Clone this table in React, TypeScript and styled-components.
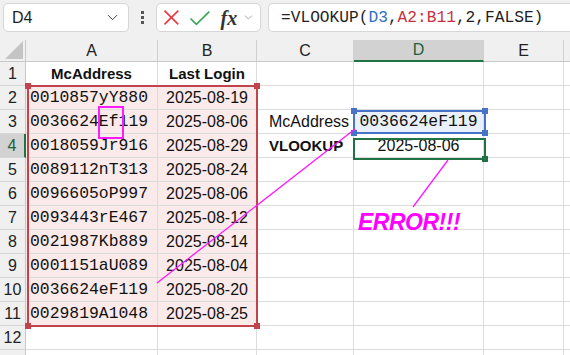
import React from "react";
import styled, { createGlobalStyle } from "styled-components";
import { ChevronDown } from "lucide-react";

const GlobalStyle = createGlobalStyle`
  html, body {
    margin: 0;
    padding: 0;
    background: #ffffff;
    overflow: hidden;
  }
  body {
    font-family: "Liberation Sans", Arial, sans-serif;
  }
`;

const SANS = `"Liberation Sans", Arial, sans-serif`;
const MONO = `"Liberation Mono", "DejaVu Sans Mono", monospace`;
const GRID_LINE = "#dcdcdc";
const GREEN = "#217346";
const RANGE_RED = "#c1434b";
const SEL_BLUE = "#4673c8";
const MAGENTA = "#ff1aff";

type CellData = {
  text?: React.ReactNode;
  mono?: boolean;
  bold?: boolean;
  align?: "left" | "center" | "right";
  fill?: string;
  error?: boolean;
};

const PINK = "#fbeaea";

const rows: Record<number, Record<string, CellData>> = {
  1: {
    A: { text: "McAddress", bold: true, align: "center" },
    B: { text: "Last Login", bold: true, align: "center" },
  },
  3: {
    C: { text: "McAddress" },
    D: { text: "0036624eF119", mono: true, align: "center", fill: "#eaf0f9" },
  },
  4: {
    C: { text: "VLOOKUP", bold: true },
    D: { text: "2025-08-06", align: "center" },
  },
  7: {
    D: { text: "ERROR!!!", error: true },
  },
};

const data: [React.ReactNode, string][] = [
  ["0010857yY880", "2025-08-19"],
  [
    <>
      0036624<Marked>Ef</Marked>119
    </>,
    "2025-08-06",
  ],
  ["0018059Jr916", "2025-08-29"],
  ["0089112nT313", "2025-08-24"],
  ["0096605oP997", "2025-08-06"],
  ["0093443rE467", "2025-08-12"],
  ["0021987Kb889", "2025-08-14"],
  ["0001151aU089", "2025-08-04"],
  ["0036624eF119", "2025-08-20"],
  ["0029819A1048", "2025-08-25"],
];

data.forEach(([mac, date], i) => {
  const r = i + 2;
  rows[r] = {
    ...(rows[r] || {}),
    A: { text: mac, mono: true, fill: PINK },
    B: { text: date, align: "center", fill: PINK },
  };
});

const COLS = ["A", "B", "C", "D", "E", "F"];
const ROW_COUNT = 13;
const LAST_FULL_ROW = 12;

function Marked({ children }: { children: React.ReactNode }) {
  return <MarkSpan>{children}</MarkSpan>;
}

export default function App() {
  return (
    <>
      <GlobalStyle />
      <Page>
        <Toolbar>
          <NameBox>
            <NameText>D4</NameText>
            <ChevronDown size={17} strokeWidth={1.4} color="#444" />
          </NameBox>
          <Grip>
            <span />
            <span />
            <span />
          </Grip>
          <Controls>
            <svg width="17" height="17" viewBox="0 0 17 17">
              <path d="M1.5 1.5 L15.5 15.5 M15.5 1.5 L1.5 15.5" stroke="#e5393f" strokeWidth="1.6" fill="none" />
            </svg>
            <svg width="22" height="16" viewBox="0 0 22 16">
              <path d="M1.5 8.5 L7.5 14.5 L20.5 1.5" stroke="#3ba55a" strokeWidth="1.7" fill="none" />
            </svg>
            <Fx>fx</Fx>
            <ChevronDown size={13} strokeWidth={1.6} color="#999" />
          </Controls>
          <FormulaBox>
            =VLOOKUP(<RefBlue>D3</RefBlue>,<RefRed>A2:B11</RefRed>,2,FALSE)
          </FormulaBox>
        </Toolbar>

        <Sheet>
          <Corner>
            <svg width="18" height="18" viewBox="0 0 18 18">
              <path d="M18 0 L18 18 L0 18 Z" fill="#c4c4c4" />
            </svg>
          </Corner>
          {COLS.map((c) => (
            <ColHead key={c} $active={c === "D"}>
              {c === "F" ? "" : c}
            </ColHead>
          ))}

          {Array.from({ length: ROW_COUNT }, (_, i) => i + 1).map((r) => (
            <React.Fragment key={r}>
              <RowHead $active={r === 4}>{r <= LAST_FULL_ROW ? r : ""}</RowHead>
              {COLS.map((c) => {
                const cell = rows[r]?.[c];
                if (cell?.error) {
                  return (
                    <Cell key={c}>
                      <ErrorText>{cell.text}</ErrorText>
                    </Cell>
                  );
                }
                return (
                  <Cell
                    key={c}
                    $mono={cell?.mono}
                    $bold={cell?.bold}
                    $align={cell?.align}
                    $fill={cell?.fill}
                    $indent={c === "C"}
                  >
                    {cell?.text}
                  </Cell>
                );
              })}
            </React.Fragment>
          ))}

          <RangeBox>
            <Handle $color={RANGE_RED} $v="top" $h="left" />
            <Handle $color={RANGE_RED} $v="top" $h="right" />
            <Handle $color={RANGE_RED} $v="bottom" $h="left" />
            <Handle $color={RANGE_RED} $v="bottom" $h="right" />
          </RangeBox>
          <LookupBox>
            <Handle $color={SEL_BLUE} $v="top" $h="left" />
            <Handle $color={SEL_BLUE} $v="top" $h="right" />
            <Handle $color={SEL_BLUE} $v="bottom" $h="left" />
            <Handle $color={SEL_BLUE} $v="bottom" $h="right" />
          </LookupBox>
          <ActiveBox>
            <Handle $color={GREEN} $v="bottom" $h="right" />
          </ActiveBox>

          <Arrows width="570" height="315" viewBox="0 0 570 315">
            <line x1="355" y1="89" x2="157" y2="243" stroke={MAGENTA} strokeWidth="1.3" />
            <line x1="448" y1="120" x2="413" y2="167" stroke={MAGENTA} strokeWidth="1.3" />
          </Arrows>
        </Sheet>
      </Page>
    </>
  );
}

const Page = styled.div`
  width: 570px;
  height: 355px;
  overflow: hidden;
  background: #ffffff;
`;

const Toolbar = styled.div`
  height: 40px;
  background: #f0f0f0;
  display: flex;
  align-items: flex-start;
  padding: 3px 0 0 3px;
  box-sizing: border-box;
`;

const Box = styled.div`
  height: 29px;
  box-sizing: border-box;
  background: #ffffff;
  border: 1px solid #d6d6d6;
  border-radius: 5px;
  display: flex;
  align-items: center;
`;

const NameBox = styled(Box)`
  width: 126px;
  padding: 0 7px 0 8px;
  justify-content: space-between;
`;

const NameText = styled.span`
  font-family: ${SANS};
  font-size: 16px;
  color: #1f1f1f;
`;

const Grip = styled.div`
  width: 27px;
  height: 29px;
  display: flex;
  flex-direction: column;
  align-items: center;
  justify-content: center;
  gap: 2px;

  span {
    width: 3px;
    height: 3px;
    background: #555;
  }
`;

const Controls = styled(Box)`
  width: 105px;
  padding: 0 5px 0 6px;
  gap: 9px;
`;

const Fx = styled.span`
  font-family: "Liberation Serif", "Times New Roman", serif;
  font-style: italic;
  font-weight: 600;
  font-size: 20px;
  color: #333;
  margin-left: 1px;
  margin-right: -4px;
  line-height: 1;
`;

const FormulaBox = styled(Box)`
  margin-left: 7px;
  flex: 1;
  border-right: none;
  border-radius: 5px 0 0 5px;
  padding-left: 12px;
  font-family: ${MONO};
  font-size: 16.2px;
  color: #1f1f1f;
  white-space: nowrap;
`;

const RefBlue = styled.span`
  color: #2f6cc4;
`;

const RefRed = styled.span`
  color: #c8323c;
`;

const Sheet = styled.div`
  position: relative;
  display: grid;
  grid-template-columns: 26px 132px 99px 97px 130px 80px 20px;
  grid-template-rows: 22px repeat(${ROW_COUNT}, 24px);
`;

const Corner = styled.div`
  background: #f0f0f0;
  border-right: 1px solid #c8c8c8;
  border-bottom: 1px solid #c8c8c8;
  box-sizing: border-box;
  display: flex;
  align-items: flex-end;
  justify-content: flex-end;
  padding: 0 2px 2px 0;
`;

const ColHead = styled.div<{ $active?: boolean }>`
  background: ${(p) => (p.$active ? "#d2d2d2" : "#f0f0f0")};
  border-right: 1px solid #d0d0d0;
  border-bottom: ${(p) => (p.$active ? `2px solid ${GREEN}` : "1px solid #c8c8c8")};
  box-sizing: border-box;
  display: flex;
  align-items: center;
  justify-content: center;
  font-family: ${SANS};
  font-size: 16px;
  color: ${(p) => (p.$active ? "#1d5f3a" : "#222")};
`;

const RowHead = styled.div<{ $active?: boolean }>`
  background: ${(p) => (p.$active ? "#d2d2d2" : "#f0f0f0")};
  border-right: ${(p) => (p.$active ? `2px solid ${GREEN}` : "1px solid #c8c8c8")};
  border-bottom: 1px solid #d6d6d6;
  box-sizing: border-box;
  display: flex;
  align-items: center;
  justify-content: center;
  font-family: ${SANS};
  font-size: 16px;
  color: ${(p) => (p.$active ? "#1d5f3a" : "#222")};
`;

const Cell = styled.div<{
  $mono?: boolean;
  $bold?: boolean;
  $align?: "left" | "center" | "right";
  $fill?: string;
  $indent?: boolean;
}>`
  background: ${(p) => p.$fill || "#ffffff"};
  border-right: 1px solid ${GRID_LINE};
  border-bottom: 1px solid ${GRID_LINE};
  box-sizing: border-box;
  display: flex;
  align-items: center;
  justify-content: ${(p) =>
    p.$align === "center" ? "center" : p.$align === "right" ? "flex-end" : "flex-start"};
  padding: ${(p) => (p.$indent ? "0 0 0 12px" : "0 4px")};
  font-family: ${(p) => (p.$mono ? MONO : SANS)};
  font-size: ${(p) => (p.$bold ? "15px" : p.$mono ? "16.4px" : "16px")};
  font-weight: ${(p) => (p.$bold ? 700 : 400)};
  color: #111;
  white-space: nowrap;
  overflow: visible;
`;

const ErrorText = styled.span`
  font-family: ${SANS};
  font-style: italic;
  font-weight: 700;
  font-size: 23px;
  color: #ff00ff;
  letter-spacing: -0.5px;
  margin-top: 9px;
`;

const MarkSpan = styled.span`
  position: relative;

  &::after {
    content: "";
    position: absolute;
    left: -1px;
    right: -5px;
    top: -6px;
    bottom: -8px;
    border: 2px solid ${MAGENTA};
  }
`;

const Overlay = styled.div`
  position: absolute;
  pointer-events: none;
  box-sizing: border-box;
`;

const RangeBox = styled(Overlay)`
  grid-column: 2 / 4;
  grid-row: 3 / 13;
  top: -1px;
  left: 1px;
  right: -1px;
  bottom: -1px;
  border: 2px solid ${RANGE_RED};
`;

const LookupBox = styled(Overlay)`
  grid-column: 5 / 6;
  grid-row: 4 / 5;
  top: 0;
  left: -1px;
  right: -2px;
  bottom: 0;
  border: 2px solid ${SEL_BLUE};
`;

const ActiveBox = styled(Overlay)`
  grid-column: 5 / 6;
  grid-row: 5 / 6;
  top: 4px;
  left: -1px;
  right: -2px;
  bottom: -2px;
  border: 2px solid ${GREEN};
`;

const Handle = styled.span<{ $color: string; $v: "top" | "bottom"; $h: "left" | "right" }>`
  position: absolute;
  width: 6px;
  height: 6px;
  background: ${(p) => p.$color};
  ${(p) => p.$v}: -4px;
  ${(p) => p.$h}: -4px;
`;

const Arrows = styled.svg`
  position: absolute;
  left: 0;
  top: 0;
  pointer-events: none;
  overflow: visible;
`;
